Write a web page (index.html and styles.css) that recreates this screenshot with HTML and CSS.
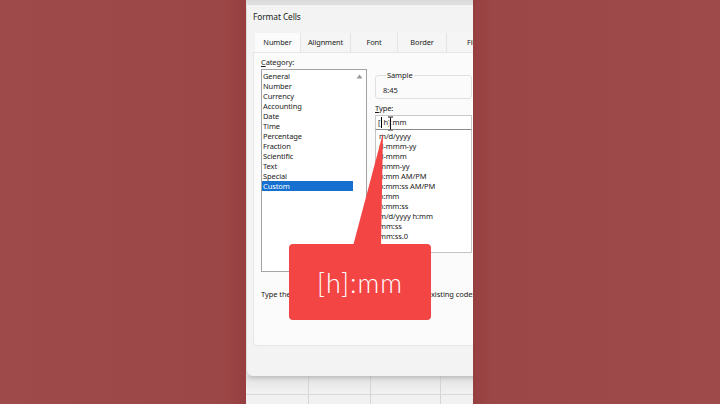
FILE: index.html
```html
<!DOCTYPE html>
<html>
<head>
<meta charset="utf-8">
<link rel="stylesheet" href="styles.css">
</head>
<body>
<div class="stage">
  <div class="side"></div>
  <div class="center">
    <div class="topstrip"></div>
    <div class="dialog">
      <div class="title">Format Cells</div>
      <div class="tabs">
        <div class="tab tab-number active">Number</div>
        <div class="tab tab-align">Alignment</div>
        <div class="tab tab-font">Font</div>
        <div class="tab tab-border">Border</div>
        <div class="tab tab-fill">Fill</div>
      </div>
      <div class="panel">
        <div class="cols">
          <div class="col-left">
            <div class="label"><u>C</u>ategory:</div>
            <div class="listbox">
              <ul class="items">
                <li>General</li>
                <li>Number</li>
                <li>Currency</li>
                <li>Accounting</li>
                <li>Date</li>
                <li>Time</li>
                <li>Percentage</li>
                <li>Fraction</li>
                <li>Scientific</li>
                <li>Text</li>
                <li>Special</li>
                <li class="selected">Custom</li>
              </ul>
              <div class="scrollbar">
                <svg class="arrow" width="7" height="5" viewBox="0 0 7 5"><path d="M3.5 0.5 L6.5 4.5 L0.5 4.5 Z" fill="#9a9a9a"/></svg>
              </div>
            </div>
          </div>
          <div class="col-right">
            <fieldset class="sample">
              <legend>Sample</legend>
              <div class="sample-value">8:45</div>
            </fieldset>
            <div class="label type-label"><u>T</u>ype:</div>
            <div class="input">[<span class="caret"></span>h]:mm</div>
            <ul class="formats">
              <li>m/d/yyyy</li>
              <li>d-mmm-yy</li>
              <li>d-mmm</li>
              <li>mmm-yy</li>
              <li>h:mm AM/PM</li>
              <li>h:mm:ss AM/PM</li>
              <li>h:mm</li>
              <li>h:mm:ss</li>
              <li>m/d/yyyy h:mm</li>
              <li>mm:ss</li>
              <li>mm:ss.0</li>
            </ul>
          </div>
        </div>
        <p class="hint">Type the number format code, using one of the existing codes as a starting point.</p>
      </div>
    </div>
    <div class="sheet">
      <div class="cell"></div><div class="cell"></div><div class="cell"></div><div class="cell"></div>
      <div class="cell"></div><div class="cell"></div><div class="cell"></div><div class="cell"></div>
    </div>
    <svg class="ibeam" width="7" height="15" viewBox="0 0 7 15">
      <path d="M1 1 H3.5 M3.5 1 H6 M3.5 1 V14 M1 14 H6" stroke="#fff" stroke-width="2.4" fill="none"/>
      <path d="M1 1 H3 Q3.5 1.3 4 1 H6 M3.5 1.4 V13.6 M1 14 H3 Q3.5 13.7 4 14 H6" stroke="#111" stroke-width="1" fill="none"/>
    </svg>
    <svg class="pointer" width="40" height="115" viewBox="0 0 40 115">
      <path d="M0 114 L30 1 L28 114 Z" fill="#f44545"/>
    </svg>
    <div class="callout">[h]:mm</div>
  </div>
  <div class="side"></div>
</div>
</body>
</html>
```

FILE: styles.css
```css
* { box-sizing: border-box; }
html, body { margin: 0; padding: 0; }
body {
  width: 720px;
  height: 404px;
  overflow: hidden;
  font-family: "Noto Sans", "Open Sans", sans-serif;
  color: #1a1a1a;
}
.stage {
  display: flex;
  height: 404px;
  background: #9c4747;
}
.side { flex: 1; }
.stage > .side:first-child { flex: 0 0 246px; background: linear-gradient(90deg, #9e4a4a 0%, #9c4747 90%, #973f40 100%); }
.stage > .side:last-child { background: linear-gradient(90deg, #973f40 0%, #9c4747 8%, #9e4a4a 100%); }

.center {
  flex: 0 0 227px;
  position: relative;
  overflow: hidden;
  display: flex;
  flex-direction: column;
  background: #ebebeb;
}
.topstrip {
  flex: 0 0 5px;
  background: linear-gradient(#d8d8d8, #e6e6e6);
}
.dialog {
  flex: 0 0 371px;
  width: 280px;
  margin-left: 1px;
  padding-left: 6px;
  background: #f3f3f3;
  border-radius: 0 0 0 6px;
  box-shadow: 0 2px 5px rgba(0, 0, 0, 0.18);
  display: flex;
  flex-direction: column;
  position: relative;
  z-index: 1;
}
.title {
  height: 28px;
  line-height: 24px;
  font-size: 8.4px;
  letter-spacing: -0.1px;
  color: #1b1b1b;
}
.tabs {
  display: flex;
  height: 19px;
  padding-left: 2px;
}
.tab {
  line-height: 19px;
  font-size: 7.4px;
  letter-spacing: -0.1px;
  text-align: center;
  color: #1b1b1b;
  border-right: 1px solid #e4e4e4;
  background: #f5f5f5;
}
.tab.active { background: #fbfbfb; }
.tab-number { flex: 0 0 46px; }
.tab-align { flex: 0 0 50px; }
.tab-font { flex: 0 0 47px; }
.tab-border { flex: 0 0 49px; }
.tab-fill { flex: 0 0 49px; border-right: none; }

.panel {
  height: 294px;
  background: #fbfbfb;
  border: 1px solid #e7e7e7;
  border-right: none;
  border-radius: 0 0 0 4px;
  padding: 4px 0 0 7px;
}
.cols {
  display: flex;
  gap: 8px;
}
.label {
  font-size: 7.5px;
  letter-spacing: -0.1px;
  line-height: 10px;
  height: 10px;
}
.label u { text-underline-offset: 1px; }
.col-left { flex: 0 0 106px; }
.listbox {
  margin-top: 2px;
  height: 203px;
  border: 1px solid #a3a3a3;
  background: #fff;
  display: flex;
}
.items {
  list-style: none;
  margin: 0;
  padding: 1px 0 0 0;
  flex: 0 0 91px;
}
.items li, .formats li {
  font-size: 7.5px;
  letter-spacing: -0.1px;
  line-height: 10px;
  height: 10px;
  padding-left: 1px;
  white-space: nowrap;
}
.items li.selected {
  background: #1570cf;
  color: #fff;
}
.scrollbar {
  flex: 1;
  display: flex;
  justify-content: center;
  padding-top: 4px;
}
.arrow { display: block; }

.col-right {
  flex: 0 0 97px;
  display: flex;
  flex-direction: column;
}
.sample {
  margin: 13px 0 0 0;
  padding: 5px 0 3px 7px;
  border: 1px solid #e0e0e0;
  border-radius: 3px;
  min-width: 0;
}
.sample legend {
  font-size: 7.5px;
  letter-spacing: -0.1px;
  line-height: 10px;
  padding: 0 1px;
  margin-left: 3px;
}
.sample-value {
  font-size: 7.5px;
  line-height: 10px;
}
.type-label { margin-top: 4px; }
.input {
  margin-top: 2px;
  height: 15px;
  border: 1px solid #c9c9c9;
  border-bottom-color: #8a8a8a;
  background: #fff;
  font-size: 7.5px;
  line-height: 13px;
  padding-left: 2px;
  display: flex;
  align-items: center;
}
.caret {
  display: inline-block;
  width: 1px;
  height: 11px;
  background: #000;
  margin: 0 1px;
}
.formats {
  list-style: none;
  margin: 0;
  padding: 1px 0 0 2px;
  height: 123px;
  border: 1px solid #c4c4c4;
  border-top: none;
  background: #fff;
}
.hint {
  margin: 17px 0 0 0;
  font-size: 7.5px;
  letter-spacing: -0.06px;
  line-height: 10px;
  white-space: nowrap;
}

.sheet {
  flex: 1;
  display: grid;
  grid-template-columns: 63px 62px 70px 70px;
  grid-template-rows: 19px 19px;
  background: linear-gradient(#e2e2e2, #f0f0f0 40%, #f3f3f3);
}
.cell {
  border-right: 1px solid #d5d5d5;
  border-bottom: 1px solid #d9d9d9;
}

.ibeam {
  position: absolute;
  left: 141px;
  top: 116px;
  z-index: 3;
}
.pointer {
  position: absolute;
  left: 107px;
  top: 132px;
  z-index: 4;
}
.callout {
  position: absolute;
  left: 43px;
  top: 244px;
  width: 142px;
  height: 76px;
  border-radius: 4px;
  background: #f44545;
  color: #fff;
  font-family: "Lato", "Open Sans", sans-serif;
  font-weight: 300;
  font-size: 27px;
  letter-spacing: 1px;
  display: flex;
  align-items: center;
  justify-content: center;
  z-index: 4;
}
```
